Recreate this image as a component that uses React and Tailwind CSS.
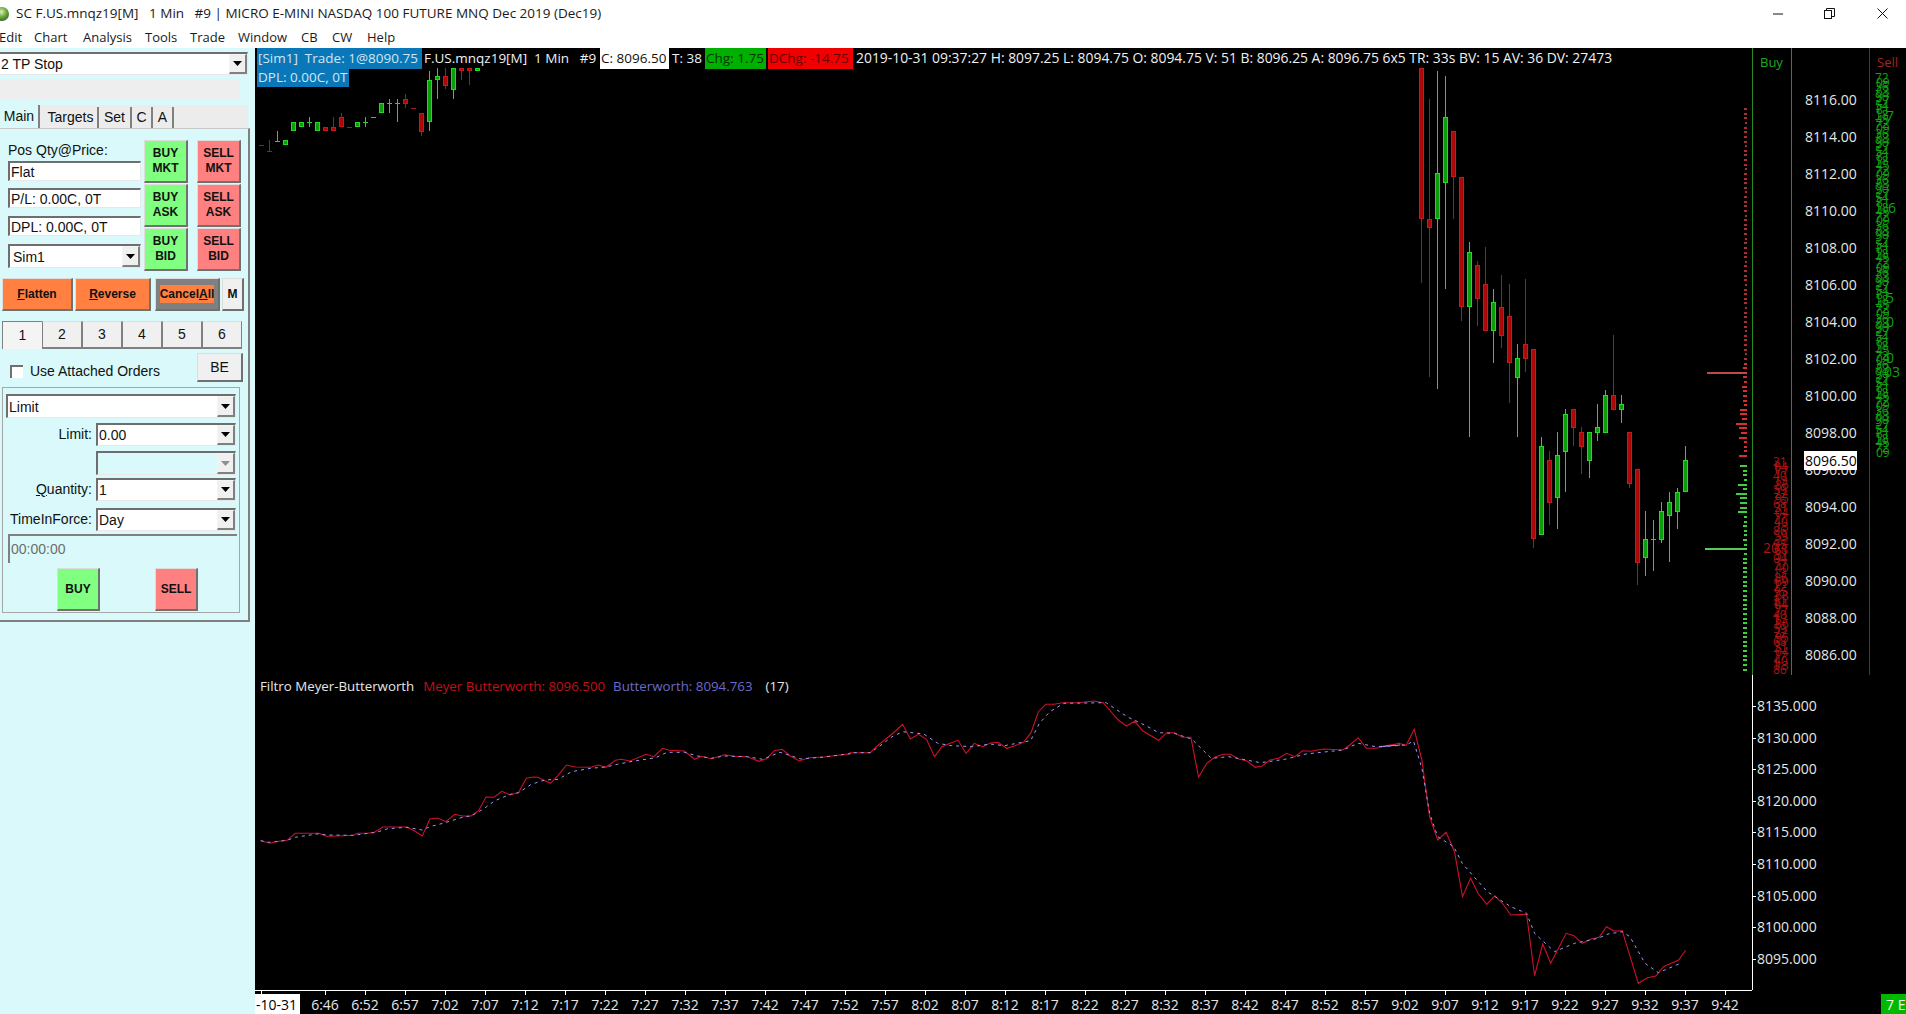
import React from 'react';
import clsx from 'clsx';

const CHART_FONT = "font-['Open_Sans',sans-serif]";

// [x, wickTop, wickBottom, bodyTop, bodyBottom, up]
const candles = [
  [261, 145, 145, 145, 145, 0], [269, 140, 151, 151, 151, 0], [277, 131, 141, 141, 141, 1], [285, 140, 145, 140, 145, 1],
  [293, 122, 131, 122, 131, 1], [301, 122, 127, 122, 127, 1], [309, 117, 127, 122, 122, 1], [317, 122, 131, 122, 131, 1],
  [325, 127, 131, 127, 131, 0], [333, 117, 131, 127, 131, 0], [341, 113, 127, 117, 127, 0], [349, 127, 127, 127, 127, 0],
  [357, 122, 127, 122, 127, 1], [365, 117, 127, 122, 122, 1], [373, 117, 117, 117, 117, 1], [381, 103, 113, 103, 113, 1],
  [389, 99, 113, 103, 103, 1], [397, 99, 122, 103, 103, 1], [405, 94, 108, 99, 104, 0], [413, 108, 108, 108, 108, 0],
  [421, 113, 136, 113, 132, 0], [429, 71, 131, 80, 122, 1], [437, 68, 99, 76, 80, 1], [445, 68, 89, 76, 86, 0],
  [453, 68, 99, 68, 90, 1], [461, 68, 80, 68, 71, 0], [469, 68, 85, 68, 71, 0], [477, 68, 71, 68, 71, 1],
  [1421, 68, 283, 68, 219, 0], [1429, 99, 377, 219, 228, 0], [1437, 71, 389, 173, 219, 1], [1445, 76, 289, 117, 183, 1],
  [1453, 131, 219, 131, 177, 0], [1461, 177, 321, 177, 307, 0], [1469, 242, 437, 252, 307, 1], [1477, 261, 326, 265, 299, 0],
  [1485, 247, 331, 284, 331, 0], [1493, 289, 363, 302, 331, 1], [1501, 275, 348, 307, 336, 0], [1509, 284, 403, 316, 363, 0],
  [1517, 344, 437, 358, 378, 1], [1525, 279, 372, 344, 359, 0], [1533, 349, 548, 349, 539, 0], [1541, 437, 535, 446, 535, 1],
  [1549, 451, 525, 460, 503, 0], [1557, 432, 529, 455, 498, 1], [1565, 409, 492, 414, 452, 1], [1573, 409, 446, 409, 428, 0],
  [1581, 427, 474, 432, 447, 0], [1589, 432, 478, 432, 461, 1], [1597, 404, 441, 427, 433, 1], [1605, 390, 433, 395, 433, 1],
  [1613, 335, 410, 395, 410, 0], [1621, 395, 423, 404, 410, 1], [1629, 432, 488, 432, 484, 0], [1637, 469, 585, 469, 563, 0],
  [1645, 511, 576, 539, 558, 1], [1653, 520, 571, 539, 539, 1], [1661, 502, 543, 511, 540, 1], [1669, 492, 562, 502, 516, 1],
  [1677, 488, 529, 492, 512, 1], [1685, 446, 492, 460, 492, 1],
];

const redA = [[28,512],[52,520],[75,514],[97,511],[118,490],[180,490],[200,499],[228,498],[270,496],[280,490],[305,490],[325,487],[347,471],[410,471],[430,483],[450,498],[470,447],[490,444],[512,455],[535,433],[555,438],[578,438],[597,422],[617,381],[638,382],[658,364],[680,375],[702,367],[722,325],[740,321],[752,322],[785,340],[805,316],[827,285],[850,291],[890,292],[910,285],[930,292],[955,271],[970,268],[993,273],[1035,253],[1055,260],[1078,235],[1095,241],[1135,243],[1162,268],[1180,259],[1205,266],[1240,254],[1265,259],[1300,260],[1330,274],[1350,266],[1370,242],[1390,238],[1412,258],[1435,273],[1460,263],[1500,261],[1540,255],[1568,251]];
const redB = [[0,218],[58,218],[75,200],[95,183],[120,162],[150,133],[172,177],[195,163],[218,178],[241,230],[262,200],[285,190],[308,181],[331,220],[354,190],[378,200],[400,189],[422,187],[447,205],[470,197],[495,187],[516,158],[537,95],[558,73],[582,73],[605,68],[650,68],[695,63],[722,68],[765,120],[788,138],[812,124],[835,153],[880,181],[903,158],[925,158],[948,172],[972,172],[994,292],[1017,250],[1040,232],[1063,223],[1085,223],[1108,237],[1132,243],[1155,262],[1175,258],[1197,240],[1222,235],[1245,220],[1268,230],[1290,212],[1313,214],[1350,207],[1405,210],[1425,195],[1449,173],[1472,205],[1500,205],[1530,197],[1568,190]];
const redC = [[0,200],[30,197],[55,190],[78,196],[102,148],[125,240],[148,410],[172,480],[197,457],[222,515],[246,650],[270,595],[292,640],[318,673],[342,647],[365,670],[390,705],[437,703],[461,887],[485,792],[509,850],[555,760],[578,767],[603,790],[630,777],[653,772],[675,740],[697,753],[722,752],[770,910],[797,893],[822,888],[845,860],[890,840],[911,811]];
const blueA = [[28,512],[50,517],[97,511],[118,502],[180,491],[200,495],[270,496],[330,487],[360,476],[410,472],[450,480],[470,470],[510,458],[560,440],[578,438],[610,417],[640,392],[680,373],[702,368],[735,343],[770,330],[805,328],[840,305],[890,295],[930,291],[960,283],[1000,274],[1060,263],[1090,247],[1135,247],[1170,258],[1205,265],[1240,258],[1300,260],[1340,268],[1385,247],[1440,267],[1500,261],[1568,251]];
const blueB = [[0,218],[58,218],[85,198],[120,170],[150,155],[210,162],[250,190],[290,197],[350,200],[400,192],[440,197],[515,182],[540,130],[570,95],[610,70],[730,68],[790,110],[840,135],[880,158],[925,160],[975,178],[1030,235],[1080,230],[1170,248],[1240,238],[1300,222],[1405,210],[1449,190],[1500,200],[1568,195]];
const blueC = [[0,200],[78,195],[100,183],[125,265],[148,400],[172,470],[220,500],[245,550],[280,590],[320,635],[390,680],[437,700],[461,760],[520,815],[580,790],[650,775],[680,762],[722,755],[745,770],[790,850],[830,878],[900,848]];

// traced from three crops of the lower pane, mapped back to page pixels
const toPage = (pts, ox, sx, oy) => pts.map(([x, y]) => `${(ox + x / sx).toFixed(1)},${(oy + y / 3).toFixed(1)}`).join(' ');
const redLine = [toPage(redA, 250, 2.613, 670), toPage(redB, 850, 2.851, 680), toPage(redC, 1380, 2.981, 680)].join(' ');
const blueLine = [toPage(blueA, 250, 2.613, 670), toPage(blueB, 850, 2.851, 680), toPage(blueC, 1380, 2.981, 680)].join(' ');

const priceLabels = [8116, 8114, 8112, 8110, 8108, 8106, 8104, 8102, 8100, 8098, 8096, 8094, 8092, 8090, 8088, 8086];
const lowerLabels = [8135, 8130, 8125, 8120, 8115, 8110, 8105, 8100, 8095];
const timeLabels = ['6:46', '6:52', '6:57', '7:02', '7:07', '7:12', '7:17', '7:22', '7:27', '7:32', '7:37', '7:42', '7:47', '7:52', '7:57', '8:02', '8:07', '8:12', '8:17', '8:22', '8:27', '8:32', '8:37', '8:42', '8:47', '8:52', '8:57', '9:02', '9:07', '9:12', '9:17', '9:22', '9:27', '9:32', '9:37', '9:42'];

const redBars = [8, 3, 3, 3, 8, 6, 8, 11, 5, 7, 7, 3, 4, 4, 4, 5, 3, 4, 40, 4, 3];
const greenBars = [7, 4, 4, 3, 9, 4, 11, 7, 7, 7, 9, 3, 3, 4, 3, 3, 4, 3, 4, 3];

const Candle = ({ c }) => {
  const [x, wt, wb, bt, bb, up] = c;
  const wick = up ? '#2fd02f' : '#a81818';
  const edge = up ? '#1fe01f' : '#c81818';
  const fill = up ? '#0a9e0a' : '#ac0808';
  return (
    <g shapeRendering="crispEdges">
      <line x1={x + 0.5} x2={x + 0.5} y1={wt} y2={wb} stroke={wick} />
      {bt === bb ? (
        <line x1={x - 2} x2={x + 3} y1={bt + 0.5} y2={bt + 0.5} stroke={wick} />
      ) : (
        <rect x={x - 1.5} y={bt + 0.5} width={4} height={bb - bt - 1} fill={fill} stroke={edge} />
      )}
    </g>
  );
};

const ChartCanvas = () => (
  <svg className={clsx('block', CHART_FONT)} width="1651" height="966" viewBox="255 48 1651 966">
    {candles.map(c => <Candle key={c[0]} c={c} />)}

    {/* market depth dashes */}
    <g shapeRendering="crispEdges">
      {Array.from({ length: 76 }, (_, i) => {
        const w = redBars[i] ?? (i % 5 === 2 ? 2 : 3);
        return <rect key={i} x={1747 - w} y={Math.round(455 - i * 4.625)} width={w} height={2} fill={i === 18 ? '#c04a4a' : i < 21 ? '#d83030' : '#a83030'} />;
      })}
      {Array.from({ length: 45 }, (_, i) => {
        const w = i === 18 ? 42 : greenBars[i] ?? 4;
        return <rect key={i} x={1747 - w} y={Math.round(465 + i * 4.625)} width={w} height={2} fill={i === 18 ? '#55cc55' : '#3fd03f'} />;
      })}
    </g>

    <g shapeRendering="crispEdges" strokeWidth="1">
      <line x1="1752.5" x2="1752.5" y1="48" y2="675" stroke="#2a8a2a" />
      <line x1="1791.5" x2="1791.5" y1="48" y2="675" stroke="#2a8a2a" />
      <line x1="1869.5" x2="1869.5" y1="48" y2="675" stroke="#8a1c1c" />
      <line x1="1752.5" x2="1752.5" y1="675" y2="990" stroke="#ffffff" />
      <line x1="255" x2="1752" y1="990.5" y2="990.5" stroke="#ffffff" />
      {lowerLabels.map((v, i) => (
        <line key={v} x1="1752" x2="1756" y1={Math.round(706 + i * 31.6) + 0.5} y2={Math.round(706 + i * 31.6) + 0.5} stroke="#ffffff" />
      ))}
      <line x1="261.5" x2="261.5" y1="990" y2="994" stroke="#ffffff" />
      {timeLabels.map((t, i) => (
        <line key={t} x1={325.5 + i * 40} x2={325.5 + i * 40} y1="990" y2="995" stroke="#ffffff" />
      ))}
    </g>

    <text x="1760" y="67" fontSize="13" fill="#22a822">Buy</text>
    <text x="1877" y="67" fontSize="13" fill="#a82222">Sell</text>

    {/* stacked volume digits, they overlap on purpose */}
    <g fontSize="12" fill="#a81414">
      {Array.from({ length: 46 }, (_, i) => (
        <text key={i} x={1773 + (i % 3)} y={466 + i * 4.625}>{`${(i * 7 + 3) % 10}${(i * 3 + 1) % 10}`}</text>
      ))}
      <text x="1763" y="553" fontSize="14">20</text>
      <text x="1772" y="473" fontSize="14">1</text>
      <text x="1772" y="589" fontSize="14">1</text>
      <text x="1772" y="608" fontSize="14">1</text>
      <text x="1772" y="624" fontSize="14">1</text>
      <text x="1772" y="669" fontSize="14">1</text>
    </g>
    <g fontSize="12" fill="#14a014">
      {Array.from({ length: 82 }, (_, i) => (
        <text key={i} x={1875 + (i % 2)} y={82 + i * 4.625}>{`${(i * 3 + 7) % 10}${(i * 7 + 2) % 10}`}</text>
      ))}
      <text x="1886" y="121" fontSize="14">7</text>
      <text x="1888" y="213" fontSize="14">6</text>
      <text x="1886" y="303" fontSize="14">5</text>
      <text x="1886" y="327" fontSize="14">0</text>
      <text x="1886" y="363" fontSize="14">0</text>
      <text x="1884" y="377" fontSize="14">03</text>
    </g>

    <polyline points={redLine} fill="none" stroke="#d0102a" strokeWidth="1.1" />
    <polyline points={blueLine} fill="none" stroke="#9a9aff" strokeWidth="1" strokeDasharray="3 4" />

    {priceLabels.map((v, i) => (
      <text key={v} x="1805" y={100 + i * 37 + 5} fontSize="14" fill="#e6e6e6">{v}.00</text>
    ))}
    <rect x="1804" y="451" width="53" height="19" fill="#ffffff" />
    <text x="1805" y="466" fontSize="14" fill="#000000">8096.50</text>

    {lowerLabels.map((v, i) => (
      <text key={v} x="1757" y={706 + i * 31.6 + 5} fontSize="14" fill="#e6e6e6">{v}.000</text>
    ))}

    {timeLabels.map((t, i) => (
      <text key={t} x={325 + i * 40} y="1010" fontSize="14" textAnchor="middle" fill="#e6e6e6">{t}</text>
    ))}
    <rect x="255" y="994" width="45" height="20" fill="#ffffff" />
    <text x="256" y="1010" fontSize="14" fill="#000000">-10-31</text>
  </svg>
);

const Arrow = ({ disabled }) => (
  <div className="flex w-[18px] shrink-0 items-center justify-center border-r-2 border-b-2 border-[#808080] border-t border-l border-t-[#f4f4f4] border-l-[#f4f4f4] bg-[#f0f0f0]">
    <svg width="9" height="5" viewBox="0 0 9 5"><polygon points="0,0 9,0 4.5,5" fill={disabled ? '#909090' : '#000000'} /></svg>
  </div>
);

const Select = ({ value, className, disabled }) => (
  <div className={clsx('flex border-t-2 border-l-2 border-t-[#6e6e6e] border-l-[#6e6e6e] border-r border-b border-r-[#e8e8e8] border-b-[#e8e8e8]', disabled ? 'bg-[#d9f9fb]' : 'bg-white', className)}>
    <span className="flex-1 self-center pl-[1px] leading-none">{value}</span>
    <Arrow disabled={disabled} />
  </div>
);

const Field = ({ value, className }) => (
  <div className={clsx('flex items-center border-t-2 border-l-2 border-t-[#6e6e6e] border-l-[#6e6e6e] border-r border-b border-r-[#e8e8e8] border-b-[#e8e8e8] bg-white pl-[1px] leading-none', className)}>
    {value}
  </div>
);

const Raised = ({ children, className }) => (
  <div className={clsx('flex items-center justify-center border-t border-l border-t-[#dddddd] border-l-[#dddddd] border-r-2 border-b-2 border-r-[#707070] border-b-[#707070] text-center', className)}>
    {children}
  </div>
);

const Trade = ({ a, b, sell, className }) => (
  <Raised className={clsx('h-[43px] w-[44px] text-[12px] leading-[15px] font-bold', sell ? 'bg-[#ff8080]' : 'bg-[#80ff80]', className)}>
    <div>{a}<br />{b}</div>
  </Raised>
);

const Row = ({ label, children, className }) => (
  <div className={clsx('flex', className)}>
    <span className="w-[89px] shrink-0 self-center pr-[4px] text-right">{label}</span>
    {children}
  </div>
);

const SidePanel = () => (
  <div className="flex w-[255px] shrink-0 flex-col overflow-hidden bg-[#d9f9fb] font-['Liberation_Sans',sans-serif] text-[14px] text-[#111111]">
    <Select value="2 TP Stop" className="mt-[4px] -ml-[2px] h-[23px] w-[250px]" />
    <div className="mt-[4px] h-[20px] w-[240px] bg-[#eeeeee]" />

    <div className="mt-[6px] flex h-[23px] w-[248px] items-end bg-[#ececec]">
      <div className="flex h-[23px] w-[40px] items-center justify-center border-r-2 border-[#808080] bg-[#d9f9fb]">Main</div>
      <div className="ml-[4px] flex h-[21px] w-[55px] items-center justify-center border-r-2 border-[#808080]">Targets</div>
      <div className="flex h-[21px] w-[33px] items-center justify-center border-r-2 border-[#808080]">Set</div>
      <div className="flex h-[21px] w-[21px] items-center justify-center border-r-2 border-[#808080]">C</div>
      <div className="flex h-[21px] w-[21px] items-center justify-center border-r-2 border-[#808080]">A</div>
    </div>

    <div className="h-[494px] w-[250px] border-t border-r-2 border-b-2 border-t-[#c8c8c8] border-r-[#808080] border-b-[#808080]">
      <div className="flex pt-[10px]">
        <div className="ml-[8px] w-[133px]">
          <div className="flex h-[22px] items-center leading-none">Pos Qty@Price:</div>
          <Field value="Flat" className="h-[20px]" />
          <Field value="P/L: 0.00C, 0T" className="mt-[7px] h-[20px]" />
          <Field value="DPL: 0.00C, 0T" className="mt-[8px] h-[20px]" />
          <Select value="Sim1" className="mt-[8px] h-[24px] pl-[2px]" />
        </div>
        <div className="mt-[1px] ml-[3px] flex flex-col gap-[1px]">
          <Trade a="BUY" b="MKT" />
          <Trade a="BUY" b="ASK" />
          <Trade a="BUY" b="BID" />
        </div>
        <div className="mt-[1px] ml-[9px] flex flex-col gap-[1px]">
          <Trade a="SELL" b="MKT" sell />
          <Trade a="SELL" b="ASK" sell />
          <Trade a="SELL" b="BID" sell />
        </div>
      </div>

      <div className="mt-[7px] flex pl-[2px] text-[12px] font-bold">
        <Raised className="h-[33px] w-[71px] bg-[#ff8040]"><span><u>F</u>latten</span></Raised>
        <Raised className="ml-[2px] h-[33px] w-[76px] bg-[#ff8040]"><span><u>R</u>everse</span></Raised>
        <Raised className="ml-[4px] h-[33px] w-[65px] bg-[#808080]"><span className="bg-[#ff8040]">Cancel<u>A</u>ll</span></Raised>
        <Raised className="ml-[2px] h-[33px] w-[22px] bg-[#f0f0f0]">M</Raised>
      </div>

      <div className="mt-[10px] flex pl-[2px]">
        <div className="flex h-[28px] w-[40px] items-center justify-center border-t border-l border-[#808080] bg-[#f4f4f4]">1</div>
        {[2, 3, 4, 5, 6].map(n => (
          <div key={n} className="flex h-[28px] w-[40px] items-center justify-center border-t border-l border-r border-b-2 border-t-[#dddddd] border-l-[#808080] border-r-[#808080] border-b-[#808080] bg-[#f0f0f0]">{n}</div>
        ))}
      </div>

      <div className="mt-[4px] flex h-[29px] items-center pl-[10px]">
        <div className="mt-[8px] h-[13px] w-[13px] border-t-2 border-l-2 border-t-[#707070] border-l-[#707070] bg-white" />
        <span className="mt-[8px] ml-[7px]">Use Attached Orders</span>
        <Raised className="mr-[5px] ml-auto h-[29px] w-[46px] bg-[#f0f0f0]">BE</Raised>
      </div>

      <div className="mt-[5px] ml-[2px] h-[226px] w-[238px] border border-[#a6a6a6] pt-[6px]">
        <Select value="Limit" className="ml-[3px] h-[24px] w-[230px]" />
        <Row label="Limit:" className="mt-[5px] h-[23px] pl-[4px]"><Select value="0.00" className="h-[23px] w-[140px]" /></Row>
        <Row className="mt-[5px] h-[24px] pl-[4px]"><Select className="h-[24px] w-[140px]" disabled /></Row>
        <Row label={<><u>Q</u>uantity:</>} className="mt-[3px] h-[23px] pl-[4px]"><Select value="1" className="h-[23px] w-[140px]" /></Row>
        <Row label="TimeInForce:" className="mt-[7px] h-[23px] pl-[4px]"><Select value="Day" className="h-[23px] w-[140px]" /></Row>
        <div className="mt-[3px] ml-[5px] flex h-[29px] w-[229px] items-center border-t-2 border-l-2 border-t-[#808080] border-l-[#808080] bg-[#d9f9fb] pl-[1px] text-[#6d6d6d]">00:00:00</div>
        <div className="mt-[5px] flex pl-[54px] text-[12px]">
          <Trade a="BUY" className="!h-[43px] !w-[43px]" />
          <Trade a="SELL" sell className="ml-[55px] !h-[43px] !w-[43px]" />
        </div>
      </div>
    </div>
  </div>
);

const TitleBar = () => (
  <div className={clsx('flex h-[26px] shrink-0 items-center bg-white pt-[1px] text-[13.5px] whitespace-pre text-[#1a1a1a]', CHART_FONT)}>
    <svg className="-ml-[5px] shrink-0" width="14" height="14" viewBox="0 0 14 14">
      <defs>
        <radialGradient id="orb" cx="0.45" cy="0.35" r="0.7">
          <stop offset="0" stopColor="#d8f0c0" />
          <stop offset="0.5" stopColor="#6fae3a" />
          <stop offset="1" stopColor="#3c5a34" />
        </radialGradient>
      </defs>
      <circle cx="7" cy="7" r="7" fill="url(#orb)" />
    </svg>
    <span className="ml-[7px]">SC F.US.mnqz19[M]   1 Min   #9 | MICRO E-MINI NASDAQ 100 FUTURE MNQ Dec 2019 (Dec19)</span>
    <div className="ml-auto flex items-center">
      <svg width="10" height="2" viewBox="0 0 10 2"><line x1="0" x2="10" y1="1" y2="1" stroke="#111" /></svg>
      <svg className="ml-[41px]" width="11" height="11" viewBox="0 0 11 11" fill="none" stroke="#111">
        <rect x="0.5" y="2.5" width="7" height="8" />
        <path d="M2.5 2.5V0.5H10.5V8.5H7.5" />
      </svg>
      <svg className="mr-[18px] ml-[42px]" width="11" height="11" viewBox="0 0 11 11" fill="none" stroke="#111">
        <path d="M0.5 0.5L10.5 10.5M10.5 0.5L0.5 10.5" />
      </svg>
    </div>
  </div>
);

const menus = [['Edit', 'w-[35px]'], ['Chart', 'w-[49px]'], ['Analysis', 'w-[62px]'], ['Tools', 'w-[45px]'], ['Trade', 'w-[48px]'], ['Window', 'w-[63px]'], ['CB', 'w-[31px]'], ['CW', 'w-[35px]'], ['Help', 'w-[40px]']];

const MenuBar = () => (
  <div className={clsx('flex h-[22px] shrink-0 items-center bg-white pt-[1px] text-[13px] text-[#1a1a1a]', CHART_FONT)}>
    {menus.map(([m, w]) => <span key={m} className={clsx('mr-[1px] -ml-[1px] shrink-0', w)}>{m}</span>)}
  </div>
);

const App = () => (
  <div className="flex h-[1014px] w-[1906px] flex-col overflow-hidden bg-white">
    <TitleBar />
    <MenuBar />
    <div className="flex flex-1">
      <SidePanel />
      <div className="relative flex-1 bg-black">
        <ChartCanvas />

        <div className={clsx('absolute top-[1px] left-[2px] flex h-[19px] items-center text-[13.5px] whitespace-pre text-[#f0f0f0]', CHART_FONT)}>
          <span className="w-[165px] bg-[#0a78b8] pl-[1px] text-[#cfe6f4]">[Sim1]  Trade: 1@8090.75</span>
          <span className="ml-[2px] w-[176px]">F.US.mnqz19[M]  1 Min   #9</span>
          <span className="w-[69px] bg-white pl-[1px] text-[#111111]">C: 8096.50</span>
          <span className="ml-[3px] w-[33px]">T: 38</span>
          <span className="w-[61px] bg-[#00b000] pl-[1px] text-[#003800]">Chg: 1.75</span>
          <span className="ml-[2px] w-[85px] bg-[#f00000] pl-[1px] text-[#6a0000]">DChg: -14.75</span>
          <span className="ml-[3px] text-[13.9px]">2019-10-31 09:37:27 H: 8097.25 L: 8094.75 O: 8094.75 V: 51 B: 8096.25 A: 8096.75 6x5 TR: 33s BV: 15 AV: 36 DV: 27473</span>
        </div>
        <div className={clsx('absolute top-[20px] left-[2px] flex h-[19px] w-[92px] items-center bg-[#0a78b8] pl-[1px] text-[13.5px] text-[#cfe6f4]', CHART_FONT)}>
          DPL: 0.00C, 0T
        </div>

        <div className={clsx('absolute top-[629px] left-[5px] flex text-[13.3px] whitespace-pre', CHART_FONT)}>
          <span className="text-[#e6e6e6]">Filtro Meyer-Butterworth</span>
          <span className="ml-[9px] text-[#c01018]">Meyer Butterworth: 8096.500</span>
          <span className="ml-[8px] text-[#6a6ac8]">Butterworth: 8094.763</span>
          <span className="ml-[13px] text-[#e6e6e6]">(17)</span>
        </div>

        <div className={clsx('absolute right-0 bottom-0 flex h-[20px] w-[25px] items-center overflow-hidden bg-[#00b800] pl-[5px] text-[14px] whitespace-pre text-[#e8ffe8]', CHART_FONT)}>
          7 E
        </div>
      </div>
    </div>
  </div>
);

export default App;
